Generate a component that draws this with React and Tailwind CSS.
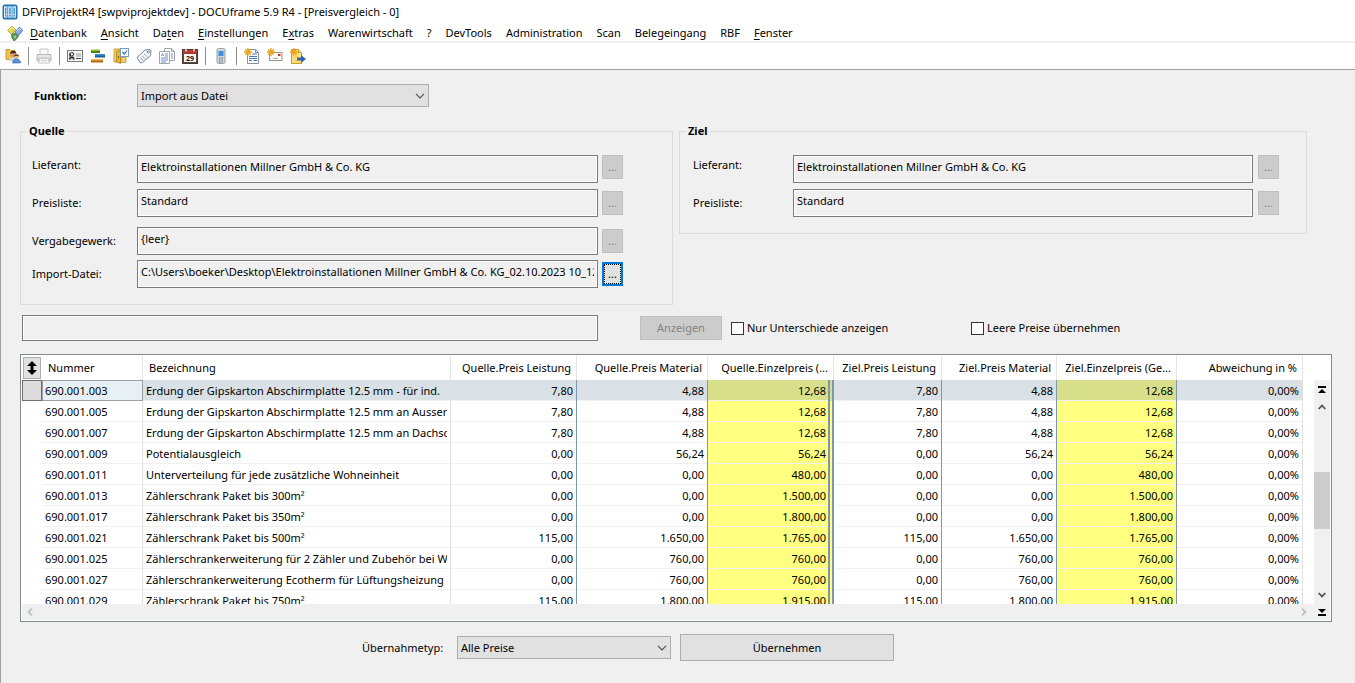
import { useState } from "react";

const menuItems = [
  { label: "Datenbank", key: 0 },
  { label: "Ansicht", key: 0 },
  { label: "Daten", key: 2 },
  { label: "Einstellungen", key: 0 },
  { label: "Extras", key: 1 },
  { label: "Warenwirtschaft" },
  { label: "?" },
  { label: "DevTools" },
  { label: "Administration" },
  { label: "Scan" },
  { label: "Belegeingang" },
  { label: "RBF" },
  { label: "Fenster", key: 0 },
];

const rows = [
  ["690.001.003", "Erdung der Gipskarton Abschirmplatte 12.5 mm - für ind.", "7,80", "4,88", "12,68"],
  ["690.001.005", "Erdung der Gipskarton Abschirmplatte 12.5 mm an Aussenwand", "7,80", "4,88", "12,68"],
  ["690.001.007", "Erdung der Gipskarton Abschirmplatte 12.5 mm an Dachschräge", "7,80", "4,88", "12,68"],
  ["690.001.009", "Potentialausgleich", "0,00", "56,24", "56,24"],
  ["690.001.011", "Unterverteilung für jede zusätzliche Wohneinheit", "0,00", "0,00", "480,00"],
  ["690.001.013", "Zählerschrank Paket bis 300m²", "0,00", "0,00", "1.500,00"],
  ["690.001.017", "Zählerschrank Paket bis 350m²", "0,00", "0,00", "1.800,00"],
  ["690.001.021", "Zählerschrank Paket bis 500m²", "115,00", "1.650,00", "1.765,00"],
  ["690.001.025", "Zählerschrankerweiterung für 2 Zähler und Zubehör bei Wärme", "0,00", "760,00", "760,00"],
  ["690.001.027", "Zählerschrankerweiterung Ecotherm für Lüftungsheizung", "0,00", "760,00", "760,00"],
  ["690.001.029", "Zählerschrank Paket bis 750m²", "115,00", "1.800,00", "1.915,00"],
];

const Icon = ({ children }) => (
  <svg viewBox="0 0 16 16" className="block size-4" aria-hidden="true">
    {children}
  </svg>
);

const AppIcon = () => (
  <Icon>
    <rect x="0.5" y="0.5" width="15" height="15" rx="2.5" fill="#1c6aa8" />
    <rect x="1.5" y="1.5" width="13" height="13" rx="1.5" fill="#2f86c6" />
    {[2, 6.3, 10.6].map((x) => (
      <g key={x}>
        <rect x={x} y="2.5" width="3.3" height="11" fill="#fff" />
        <rect x={x + 0.8} y="3.5" width="1.7" height="7" fill="#4a98d2" />
        <rect x={x + 0.8} y="11.3" width="1.7" height="1.2" fill="#17568b" />
      </g>
    ))}
  </Icon>
);

const DatabaseIcon = () => (
  <Icon>
    <path d="M.5 5.500 5 1l4 4-4.500 4.500z" fill="#e2d34c" stroke="#a8962b" strokeWidth=".7" />
    <path d="m8 7 4.500-5L16 5.500 11 11z" fill="#86a9e6" stroke="#4668ae" strokeWidth=".7" />
    <path d="M4.500 9.500 8 8l3.500 3-2 3L7 16l-2-3z" fill="#5a9a57" stroke="#35703a" strokeWidth=".7" />
    <path d="m2.500 5.500 2.500-3 1.500 1.500" fill="none" stroke="#fff8a5" />
    <path d="m10 6.500 2.500-3L14 5" fill="none" stroke="#d5e2ff" />
    <path d="m6.500 11.500 2-1 1 1-1 2z" fill="#a8d49e" />
  </Icon>
);

const UserIcon = () => (
  <Icon>
    <path d="M1 1.500h4l1 1h4v9H1z" fill="#f2c14c" stroke="#b98a25" strokeWidth=".8" />
    <circle cx="8" cy="6" r="3" fill="#d99a62" />
    <path d="M5 6c0-4 6-4.500 6.500-.5L10 5 8 5.500 6.500 5z" fill="#3e2617" />
    <path d="M4 13c0-3 2-4 4-4s3.500 1 4 4z" fill="#c9d2e0" />
    <circle cx="11.500" cy="9" r="2.300" fill="#f0b98a" />
    <path d="M9 8.500c0-3 5-3 5 0l-2-.7z" fill="#5c3217" />
    <path d="M7.500 15c0-3 2-4 4-4s4 1 4 4z" fill="#5c8fda" stroke="#30619f" strokeWidth=".6" />
  </Icon>
);

const PrinterIcon = () => (
  <Icon>
    <path d="M4 1h8v6H4z" fill="#fafafa" stroke="#c4c4c4" />
    <path d="M1 6.500h14v6H1z" fill="#d9d9d9" stroke="#b8b8b8" />
    <path d="M2 8h12" stroke="#f5f5f5" />
    <path d="M3.500 10.500h9l1 4.500h-11z" fill="#f7f7f7" stroke="#c4c4c4" />
    <path d="M5 12.500h6" stroke="#ccc" />
  </Icon>
);

const CardIcon = () => (
  <Icon>
    <rect x=".5" y="2.500" width="15" height="11" fill="#f7f7f5" stroke="#787878" />
    <rect x="2" y="4" width="5.500" height="8" fill="#cfd2cf" />
    <circle cx="4.800" cy="6.300" r="1.700" fill="#fff" stroke="#222" />
    <path d="M2.500 11.500C3 8.500 6.500 8.500 7 11.500M3 5.500v3" fill="none" stroke="#222" strokeWidth="1.300" />
    <path d="M9 6h5M9 8h5" stroke="#999" />
    <path d="M9 10.500h5" stroke="#444" />
  </Icon>
);

const GanttIcon = () => (
  <Icon>
    <rect x="1" y="1.500" width="9" height="3" fill="#9abf2f" />
    <rect x="1" y="3" width="9" height="2" fill="#49851b" />
    <rect x="5" y="6" width="10" height="3" fill="#3990cf" />
    <rect x="5" y="7.500" width="10" height="2" fill="#1d5d98" />
    <rect x="1" y="11" width="12" height="3" fill="#f1b247" />
    <rect x="1" y="12.500" width="12" height="2" fill="#b36a15" />
  </Icon>
);

const FolderIcon = () => (
  <Icon>
    <path d="M1 1h6v13H1z" fill="#f5ce5e" stroke="#b98f2a" strokeWidth=".8" />
    <path d="M8 9h5v5.500H8z" fill="#f2cc66" stroke="#b98f2a" strokeWidth=".7" />
    <path d="M3.500 3h4v12.500L3.500 14z" fill="#e6b43b" stroke="#b08425" strokeWidth=".8" />
    <rect x="7.500" y=".5" width="8" height="8" fill="#fff" stroke="#779ac6" />
    <path d="m9.500 4 1.800 2L14 2.500" fill="none" stroke="#2f6ec0" strokeWidth="1.200" />
    <path d="M5.500 8v2" stroke="#755415" />
  </Icon>
);

const TagIcon = () => (
  <Icon>
    <path d="M1 9.500 9 2l5-.5 1 1.500-.5 4.500-8 7-2 .5z" fill="#f4f7fb" stroke="#7a8490" />
    <circle cx="12.300" cy="4" r="1.100" fill="#fff" stroke="#66717e" strokeWidth=".8" />
    <path d="m4 9.500 3.500 3M6 8l3.500 3M8 6l3.500 3" stroke="#8aa0b8" strokeWidth=".9" />
  </Icon>
);

const DocsIcon = () => (
  <Icon>
    <path d="M5.500.5h7l3 3v9h-10z" fill="#fff" stroke="#a0a4ab" />
    <path d="M12.500.5v3h3" fill="none" stroke="#a0a4ab" />
    <path d="M.5 3.500h10v12H.5z" fill="#fff" stroke="#a0a4ab" />
    <path d="m2.500 8 1-2.500L4.500 8M6 6h3M6 8h3M2 10h7M2 12h7M2 14h5" fill="none" stroke="#5b80c2" strokeWidth=".9" />
    <path d="M12 6h2M12 8h2M12 10h2" stroke="#6f90c6" />
  </Icon>
);

const CalendarIcon = () => (
  <Icon>
    <rect x=".5" y="1.500" width="15" height="14" fill="#5f4741" stroke="#4a3833" />
    <rect x="1" y="2" width="14" height="3.500" fill="#b93a31" />
    <path d="M4 .5v3M12 .5v3" stroke="#e8d9d4" strokeWidth="1.500" />
    <rect x="2" y="6" width="12" height="8" fill="#fdf8f1" />
    <text x="8" y="12.700" textAnchor="middle" fontSize="7" fontWeight="bold" fill="#111">
      29
    </text>
  </Icon>
);

const PhoneIcon = () => (
  <Icon>
    <rect x="4" y=".5" width="8" height="15" rx="1.500" fill="#d3d7db" stroke="#9da2a8" />
    <rect x="5.500" y="3" width="5" height="5" fill="#4090da" />
    <path d="M6 10h1M7.500 10h1M9 10h1M6 12h1M7.500 12h1M9 12h1M6 14h1M7.500 14h1M9 14h1" stroke="#666d75" />
  </Icon>
);

const Star = () => (
  <path d="M4 0v8M0 4h8M1.200 1.200l5.600 5.600M6.800 1.200 1.200 6.800" stroke="#eda51e" strokeWidth="1.300" />
);

const NewDocIcon = () => (
  <Icon>
    <path d="M3.500 1.500h8l3 3v11h-11z" fill="#fff" stroke="#8791a0" />
    <path d="M11.500 1.500v3h3" fill="none" stroke="#8791a0" />
    <path d="M8 6h5M5 8.500h8M5 10.500h8M5 12.500h3M9.500 12.500H13" stroke="#4c7cbd" />
    <Star />
  </Icon>
);

const NewMailIcon = () => (
  <Icon>
    <rect x="2.500" y="4.500" width="12.500" height="8" fill="#fbfaf8" stroke="#999590" />
    <rect x="11" y="6" width="2.500" height="2" fill="#c8372d" />
    <path d="M6 10.500h5" stroke="#aaa" />
    <Star />
  </Icon>
);

const NewExportIcon = () => (
  <Icon>
    <path d="M1.500 1.500h7l3 3v11h-10z" fill="#ffe07a" stroke="#c79c2b" />
    <path d="M8.500 1.500v3h3" fill="#fff4c4" stroke="#c79c2b" />
    <path d="M3.500 9h5M3.500 13h6" stroke="#f5c84e" />
    <path d="M7 9.500h4V7l5 4-5 4v-2.500H7z" fill="#2f63c0" />
    <Star />
  </Icon>
);

const toolGroups = [
  [{ name: "Adressen", icon: UserIcon }],
  [{ name: "Drucken", icon: PrinterIcon }],
  [
    { name: "Kontakt", icon: CardIcon },
    { name: "Projekte", icon: GanttIcon },
    { name: "Aufgaben", icon: FolderIcon },
    { name: "Artikel", icon: TagIcon },
    { name: "Dokumente", icon: DocsIcon },
    { name: "Kalender", icon: CalendarIcon },
  ],
  [{ name: "Telefon", icon: PhoneIcon }],
  [
    { name: "Neues Dokument", icon: NewDocIcon },
    { name: "Neue Nachricht", icon: NewMailIcon },
    { name: "Neuer Export", icon: NewExportIcon },
  ],
];

function MenuLabel({ label, index }) {
  if (index === undefined) return label;
  return (
    <>
      {label.slice(0, index)}
      <span className="underline underline-offset-2">{label[index]}</span>
      {label.slice(index + 1)}
    </>
  );
}

function Dropdown({ id, options, className }) {
  return (
    <div className={`relative ${className}`}>
      <select
        id={id}
        className="block h-[23px] w-full appearance-none border border-[#adadad] bg-[#e1e1e1] pr-6 pl-[3px] outline-none"
      >
        {options.map((option) => (
          <option key={option}>{option}</option>
        ))}
      </select>
      <svg viewBox="0 0 10 6" className="pointer-events-none absolute top-[9px] right-1 h-1.5 w-2.5" aria-hidden="true">
        <path d="m1 .8 4 4 4-4" fill="none" stroke="#505050" strokeWidth="1.200" />
      </svg>
    </div>
  );
}

function Field({ id, label, value, labelWidth, className, buttonGap = "ml-1", active }) {
  return (
    <div className={`flex ${className}`}>
      <label htmlFor={id} className={`shrink-0 leading-5 ${labelWidth}`}>
        {label}
      </label>
      <input
        id={id}
        readOnly
        defaultValue={value}
        className="h-7 min-w-0 flex-1 border border-[#7a7a7a] bg-[#f0f0f0] px-[3px] pb-1.5 inset-ring inset-ring-white outline-none"
      />
      {active ? (
        <button
          aria-label={`${label} auswählen`}
          className={`h-6 w-[21px] shrink-0 border-2 border-[#0078d7] bg-[#e1e1e1] leading-4 outline-1 -outline-offset-3 outline-dotted outline-black ${buttonGap}`}
        >
          ...
        </button>
      ) : (
        <button
          disabled
          aria-label={`${label} auswählen`}
          className={`h-6 w-[21px] shrink-0 border border-[#bfbfbf] bg-[#cccccc] leading-4 text-[#838383] ${buttonGap}`}
        >
          ...
        </button>
      )}
    </div>
  );
}

function PriceTable() {
  const [selected, setSelected] = useState(0);

  // row lines are inset shadows so the column lines run through unbroken
  const rowLine = "shadow-[inset_0_-1px_#f0f0f0]";
  const greyCell = `border-r border-[#e0e0e0] ${rowLine}`;
  const blueCell = `border-r border-[#8096ae] text-right ${rowLine}`;
  const head = "border-r border-[#e5e5e5] pr-[5px] text-right";
  const yellow = (i) => (i === selected ? "bg-[#d8df8a]" : "bg-[#ffff80]");
  const doubleLine = (i) =>
    i === selected
      ? "shadow-[inset_-2px_0_#d8df8a,inset_-4px_0_#8096ae,inset_0_-1px_#f0f0f0]"
      : "shadow-[inset_-2px_0_#ffff80,inset_-4px_0_#8096ae,inset_0_-1px_#f0f0f0]";

  return (
    <table className="w-full table-fixed border-separate border-spacing-0 whitespace-nowrap">
      <colgroup>
        <col className="w-5" />
        <col className="w-[101px]" />
        <col />
        <col className="w-[126px]" />
        <col className="w-[131px]" />
        <col className="w-[126px]" />
        <col className="w-[108px]" />
        <col className="w-[115px]" />
        <col className="w-[120px]" />
        <col className="w-[126px]" />
        <col className="w-[11px]" />
      </colgroup>
      <thead>
        <tr className="h-6 [&>th]:py-0 [&>th]:font-normal">
          <th className="p-0">
            <button
              aria-label="Sortieren"
              className="ml-px flex h-[22px] w-[18px] items-center justify-center border border-[#adadad] bg-[#e1e1e1]"
            >
              <svg viewBox="0 0 10 14" className="h-3.5 w-2.5" aria-hidden="true">
                <path d="M5 0 10 5H6.500v4H10L5 14 0 9h3.500V5H0z" fill="#000" />
              </svg>
            </button>
          </th>
          <th className="border-r border-[#e5e5e5] pl-1.5 text-left">Nummer</th>
          <th className="border-r border-[#e5e5e5] pl-1.5 text-left">Bezeichnung</th>
          <th className={head}>Quelle.Preis Leistung</th>
          <th className={head}>Quelle.Preis Material</th>
          <th className={head}>Quelle.Einzelpreis (...</th>
          <th className={head}>Ziel.Preis Leistung</th>
          <th className={head}>Ziel.Preis Material</th>
          <th className={head}>Ziel.Einzelpreis (Ge...</th>
          <th className={head}>Abweichung in %</th>
          <th></th>
        </tr>
      </thead>
      <tbody>
        {rows.map(([number, text, work, material, total], i) => (
          <tr
            key={number}
            onClick={() => setSelected(i)}
            className={`h-[21px] [&>td]:px-[3px] [&>td]:py-0 ${i === selected ? "bg-[#d9e0e6]" : "bg-white"}`}
          >
            <td className={i === selected ? "border border-[#6e6e6e] bg-[#dcdcdc]" : ""}></td>
            <td className={i === selected ? "bg-[#e8f0f7] inset-ring inset-ring-[#a0a0a0]" : greyCell}>{number}</td>
            <td className={greyCell}>
              <div className="overflow-hidden">{text}</div>
            </td>
            <td className={blueCell}>{work}</td>
            <td className={blueCell}>{material}</td>
            <td className={`border-r-2 border-[#8096ae] text-right ${yellow(i)} ${doubleLine(i)}`}>
              <span className="pr-[3px]">{total}</span>
            </td>
            <td className={blueCell}>{work}</td>
            <td className={blueCell}>{material}</td>
            <td className={`${blueCell} ${yellow(i)}`}>{total}</td>
            <td className={`text-right ${greyCell}`}>0,00%</td>
            <td className="bg-white"></td>
          </tr>
        ))}
      </tbody>
    </table>
  );
}

function VerticalScrollbar() {
  return (
    <div className="mt-6 flex w-4 shrink-0 flex-col items-center bg-[#f0f0f0]">
      <button aria-label="Zum Anfang" className="flex h-[18px] w-4 items-center justify-center">
        <svg viewBox="0 0 8 7" className="h-[7px] w-2" aria-hidden="true">
          <path d="M0 0h8v2H0zM4 3l4 4H0z" fill="#000" />
        </svg>
      </button>
      <button aria-label="Nach oben" className="flex h-[18px] w-4 items-center justify-center">
        <svg viewBox="0 0 8 6" className="h-1.5 w-2" aria-hidden="true">
          <path d="m.7 5 3.300-3.500L7.300 5" fill="none" stroke="#505050" strokeWidth="1.800" />
        </svg>
      </button>
      <div className="flex w-full flex-1 flex-col">
        <div className="flex-[56]"></div>
        <div className="flex-[57] bg-[#cdcdcd]"></div>
        <div className="flex-[57]"></div>
      </div>
      <button aria-label="Nach unten" className="flex h-[18px] w-4 items-center justify-center">
        <svg viewBox="0 0 8 6" className="h-1.5 w-2" aria-hidden="true">
          <path d="m.7 1 3.300 3.500L7.300 1" fill="none" stroke="#505050" strokeWidth="1.800" />
        </svg>
      </button>
    </div>
  );
}

function HorizontalScrollbar() {
  return (
    <div className="flex h-4 items-center bg-[#f0f0f0]">
      <button aria-label="Nach links" className="flex size-4 items-center justify-center">
        <svg viewBox="0 0 6 8" className="h-2 w-1.5" aria-hidden="true">
          <path d="M5 .7 1.500 4 5 7.300" fill="none" stroke="#bfbfbf" strokeWidth="1.800" />
        </svg>
      </button>
      <div className="flex-1"></div>
      <button aria-label="Nach rechts" className="flex size-4 items-center justify-center">
        <svg viewBox="0 0 6 8" className="h-2 w-1.5" aria-hidden="true">
          <path d="M1 .7 4.500 4 1 7.300" fill="none" stroke="#bfbfbf" strokeWidth="1.800" />
        </svg>
      </button>
      <button aria-label="Zum Ende" className="ml-0.5 flex size-4 items-center justify-center">
        <svg viewBox="0 0 8 7" className="h-[7px] w-2" aria-hidden="true">
          <path d="M0 0h8L4 4zM0 5h8v2H0z" fill="#000" />
        </svg>
      </button>
    </div>
  );
}

function CheckBox({ label, className }) {
  return (
    <label className={`flex items-center gap-[3px] ${className}`}>
      <input type="checkbox" className="size-[13px] shrink-0 appearance-none border border-[#333] bg-white checked:bg-[#0078d7]" />
      {label}
    </label>
  );
}

function App() {
  return (
    <div className="flex min-h-screen flex-col bg-white font-['Noto_Sans',sans-serif] text-[11px] leading-4 text-black">
      {/* Title bar */}
      <div className="flex h-6 items-center gap-1 pl-0.5">
        <AppIcon />
        <h1>DFViProjektR4 [swpviprojektdev] - DOCUframe 5.9 R4 - [Preisvergleich - 0]</h1>
      </div>

      {/* Menu */}
      <nav className="flex h-[19px] items-center gap-3.5 border-b-2 border-[#f0f0f0] pl-[7px]">
        <div className="flex items-center gap-[7px]">
          <DatabaseIcon />
          <button>
            <MenuLabel label={menuItems[0].label} index={menuItems[0].key} />
          </button>
        </div>
        {menuItems.slice(1).map((item) => (
          <button key={item.label}>
            <MenuLabel label={item.label} index={item.key} />
          </button>
        ))}
      </nav>

      {/* Toolbar */}
      <div className="flex h-[27px] items-center gap-[7px] border-b border-[#a0a0a0] pl-[5px]">
        {toolGroups.map((group, i) => (
          <div key={i} className="flex items-center gap-[7px]">
            {i > 0 && <div className="h-[18px] w-px bg-[#8c8c8c]"></div>}
            {group.map((tool) => (
              <button key={tool.name} aria-label={tool.name}>
                <tool.icon />
              </button>
            ))}
          </div>
        ))}
      </div>

      <main className="flex-1 border-l border-[#a0a0a0] bg-[#f0f0f0] pt-3.5 pr-[23px] pb-5 pl-[19px]">
        <div className="flex items-center pl-3.5">
          <label htmlFor="funktion" className="w-[103px] font-bold">
            Funktion:
          </label>
          <Dropdown id="funktion" className="w-[292px]" options={["Import aus Datei", "Export in Datei"]} />
        </div>

        {/* Quelle / Ziel */}
        <div className="mt-4 grid grid-cols-[653fr_628fr] items-start gap-1.5 pr-[25px]">
          <fieldset className="min-w-0 border border-[#dcdcdc] pr-[49px] pb-4 pl-[11px]">
            <legend className="-ml-[5px] px-0.5 font-bold">Quelle</legend>
            <Field
              id="q-lieferant"
              label="Lieferant:"
              value="Elektroinstallationen Millner GmbH & Co. KG"
              labelWidth="w-[105px]"
              className="mt-4 items-start"
            />
            <Field id="q-preisliste" label="Preisliste:" value="Standard" labelWidth="w-[105px]" className="mt-1.5 items-center" />
            <Field id="q-gewerk" label="Vergabegewerk:" value="{leer}" labelWidth="w-[105px]" className="mt-2.5 items-center" />
            <Field
              id="q-datei"
              label="Import-Datei:"
              value="C:\Users\boeker\Desktop\Elektroinstallationen Millner GmbH & Co. KG_02.10.2023 10_12"
              labelWidth="w-[105px]"
              className="mt-[5px] items-center"
              active
            />
          </fieldset>

          <fieldset className="min-w-0 border border-[#dcdcdc] pr-[27px] pb-4 pl-[13px]">
            <legend className="-ml-[7px] px-0.5 font-bold">Ziel</legend>
            <Field
              id="z-lieferant"
              label="Lieferant:"
              value="Elektroinstallationen Millner GmbH & Co. KG"
              labelWidth="w-[100px]"
              className="mt-4 items-start"
              buttonGap="ml-[5px]"
            />
            <Field
              id="z-preisliste"
              label="Preisliste:"
              value="Standard"
              labelWidth="w-[100px]"
              className="mt-1.5 items-center"
              buttonGap="ml-[5px]"
            />
          </fieldset>
        </div>

        <div className="mt-2.5 grid grid-cols-[576fr_692fr] items-center gap-[42px] pl-0.5">
          <input
            readOnly
            aria-label="Status"
            className="h-[26px] min-w-0 border border-[#7a7a7a] bg-[#f0f0f0] px-[3px] inset-ring inset-ring-white outline-none"
          />
          <div className="flex items-center">
            <button disabled className="h-6 w-[82px] shrink-0 border border-[#bfbfbf] bg-[#cccccc] text-[#838383]">
              Anzeigen
            </button>
            <CheckBox label="Nur Unterschiede anzeigen" className="ml-[9px] w-60" />
            <CheckBox label="Leere Preise übernehmen" />
          </div>
        </div>

        {/* Price comparison */}
        <div className="mt-[13px] border border-[#828790] bg-white p-px">
          <div className="flex">
            <div className="h-[248px] min-w-0 flex-1 overflow-hidden">
              <PriceTable />
            </div>
            <VerticalScrollbar />
          </div>
          <HorizontalScrollbar />
        </div>

        <div className="mt-3 flex items-center justify-center pr-24">
          <label htmlFor="typ" className="w-[95px]">
            Übernahmetyp:
          </label>
          <Dropdown id="typ" className="w-[214px]" options={["Alle Preise", "Nur Einzelpreise"]} />
          <button className="ml-[9px] h-[27px] w-[214px] border border-[#adadad] bg-[#e1e1e1]">Übernehmen</button>
        </div>
      </main>
    </div>
  );
}

export default App;
